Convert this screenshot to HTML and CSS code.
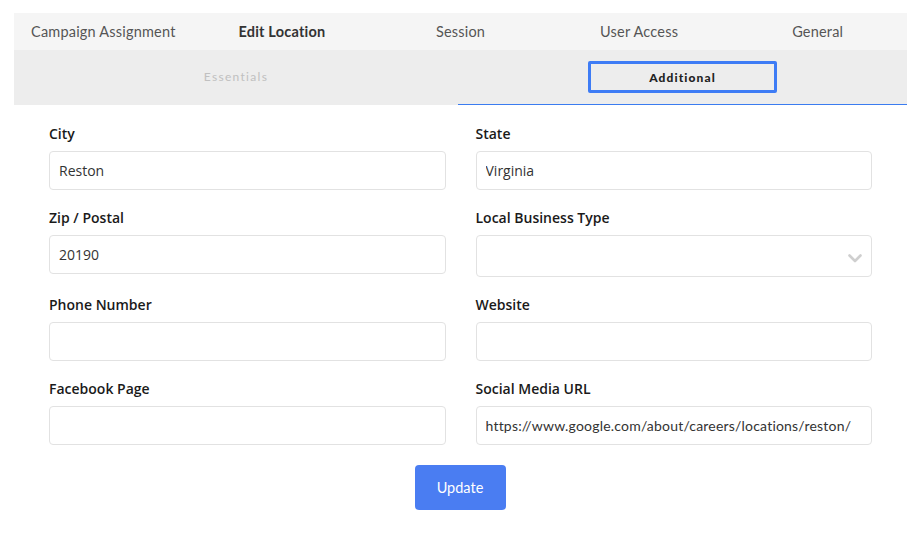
FILE: index.html
```html
<!DOCTYPE html>
<html>
<head>
<meta charset="utf-8">
<link rel="stylesheet" href="styles.css">
</head>
<body>
<div class="panel">
  <nav class="tabs">
    <div class="tab">Campaign Assignment</div>
    <div class="tab active">Edit Location</div>
    <div class="tab">Session</div>
    <div class="tab">User Access</div>
    <div class="tab">General</div>
  </nav>
  <div class="subtabs">
    <div class="subtab"><span class="sub-label muted">Essentials</span></div>
    <div class="subtab current"><span class="sub-label boxed">Additional</span></div>
  </div>
  <form class="form">
    <div class="grid">
      <div class="field">
        <label class="label">City</label>
        <input class="input" type="text" value="Reston">
      </div>
      <div class="field">
        <label class="label">State</label>
        <input class="input" type="text" value="Virginia">
      </div>
      <div class="field">
        <label class="label">Zip / Postal</label>
        <input class="input" type="text" value="20190">
      </div>
      <div class="field">
        <label class="label">Local Business Type</label>
        <div class="select">
          <svg class="chev" width="14" height="9" viewBox="0 0 14 9"><path d="M1.5 1.5 L7 7 L12.5 1.5" fill="none" stroke="#cfcfcf" stroke-width="2.6" stroke-linecap="round" stroke-linejoin="round"/></svg>
        </div>
      </div>
      <div class="field">
        <label class="label">Phone Number</label>
        <input class="input" type="text" value="">
      </div>
      <div class="field">
        <label class="label">Website</label>
        <input class="input" type="text" value="">
      </div>
      <div class="field">
        <label class="label">Facebook Page</label>
        <input class="input" type="text" value="">
      </div>
      <div class="field">
        <label class="label">Social Media URL</label>
        <input class="input url" type="text" value="https://www.google.com/about/careers/locations/reston/">
      </div>
    </div>
    <div class="actions">
      <button class="btn" type="button">Update</button>
    </div>
  </form>
</div>
</body>
</html>
```

FILE: styles.css
```css
* { box-sizing: border-box; }
html, body { margin: 0; padding: 0; background: #fff; }
body { font-family: "Open Sans", "Noto Sans", sans-serif; color: #222; }

.panel {
  width: 893px;
  margin: 13px 0 0 14px;
}

.tabs {
  display: grid;
  grid-template-columns: repeat(5, 1fr);
  height: 37px;
  background: #f5f5f5;
}
.tab {
  display: flex;
  align-items: center;
  justify-content: center;
  font-family: "Lato", "Open Sans", sans-serif;
  font-size: 14.5px;
  color: #555;
  letter-spacing: 0.2px;
  padding-bottom: 1px;
}
.tab.active { color: #333; font-weight: 700; }

.subtabs {
  display: grid;
  grid-template-columns: 444px 1fr;
  height: 55px;
  background: #ededed;
}
.subtab {
  display: flex;
  align-items: center;
  justify-content: center;
  padding-bottom: 2px;
}
.subtab.current { border-bottom: 1px solid #3b7cf0; }
.sub-label {
  font-family: "Lato", "Open Sans", sans-serif;
  font-size: 12px;
  font-weight: 700;
  letter-spacing: 1.1px;
}
.sub-label.muted { color: #c0c0c0; font-weight: 400; letter-spacing: 1.3px; }
.sub-label.boxed {
  display: flex;
  align-items: center;
  justify-content: center;
  width: 189px;
  height: 32px;
  border: 3px solid #3e7cf5;
  border-radius: 2px;
  color: #222;
  font-weight: 900;
  margin-top: 2px;
}

.form { padding: 19px 35px 0; }
.grid {
  display: grid;
  grid-template-columns: 1fr 1fr;
  column-gap: 30px;
}
.field { margin-bottom: 18px; display: flex; flex-direction: column; }
.label {
  display: block;
  font-size: 14px;
  font-weight: 600;
  line-height: 20px;
  color: #1a1a1a;
  margin-bottom: 7px;
}
.input {
  display: block;
  width: 100%;
  height: 39px;
  border: 1px solid #e2e2e2;
  border-radius: 4px;
  padding: 0 9px;
  font-family: "Open Sans", "Noto Sans", sans-serif;
  font-size: 14px;
  color: #333;
  background: #fff;
  outline: none;
}
.input.url { font-family: "Lato", "Open Sans", sans-serif; font-size: 14px; letter-spacing: 0.2px; }
.select {
  height: 42px;
  border: 1px solid #e2e2e2;
  border-radius: 4px;
  display: flex;
  align-items: center;
  justify-content: flex-end;
  padding: 4px 9px 0 0;
}
.chev { display: block; }

.actions { display: flex; justify-content: center; margin-top: 2px; }
.btn {
  width: 91px;
  height: 45px;
  border: none;
  border-radius: 4px;
  background: #4a7df2;
  color: #fff;
  font-family: "Lato", "Open Sans", sans-serif;
  font-size: 14.5px;
  margin-right: 1px;
}
```
